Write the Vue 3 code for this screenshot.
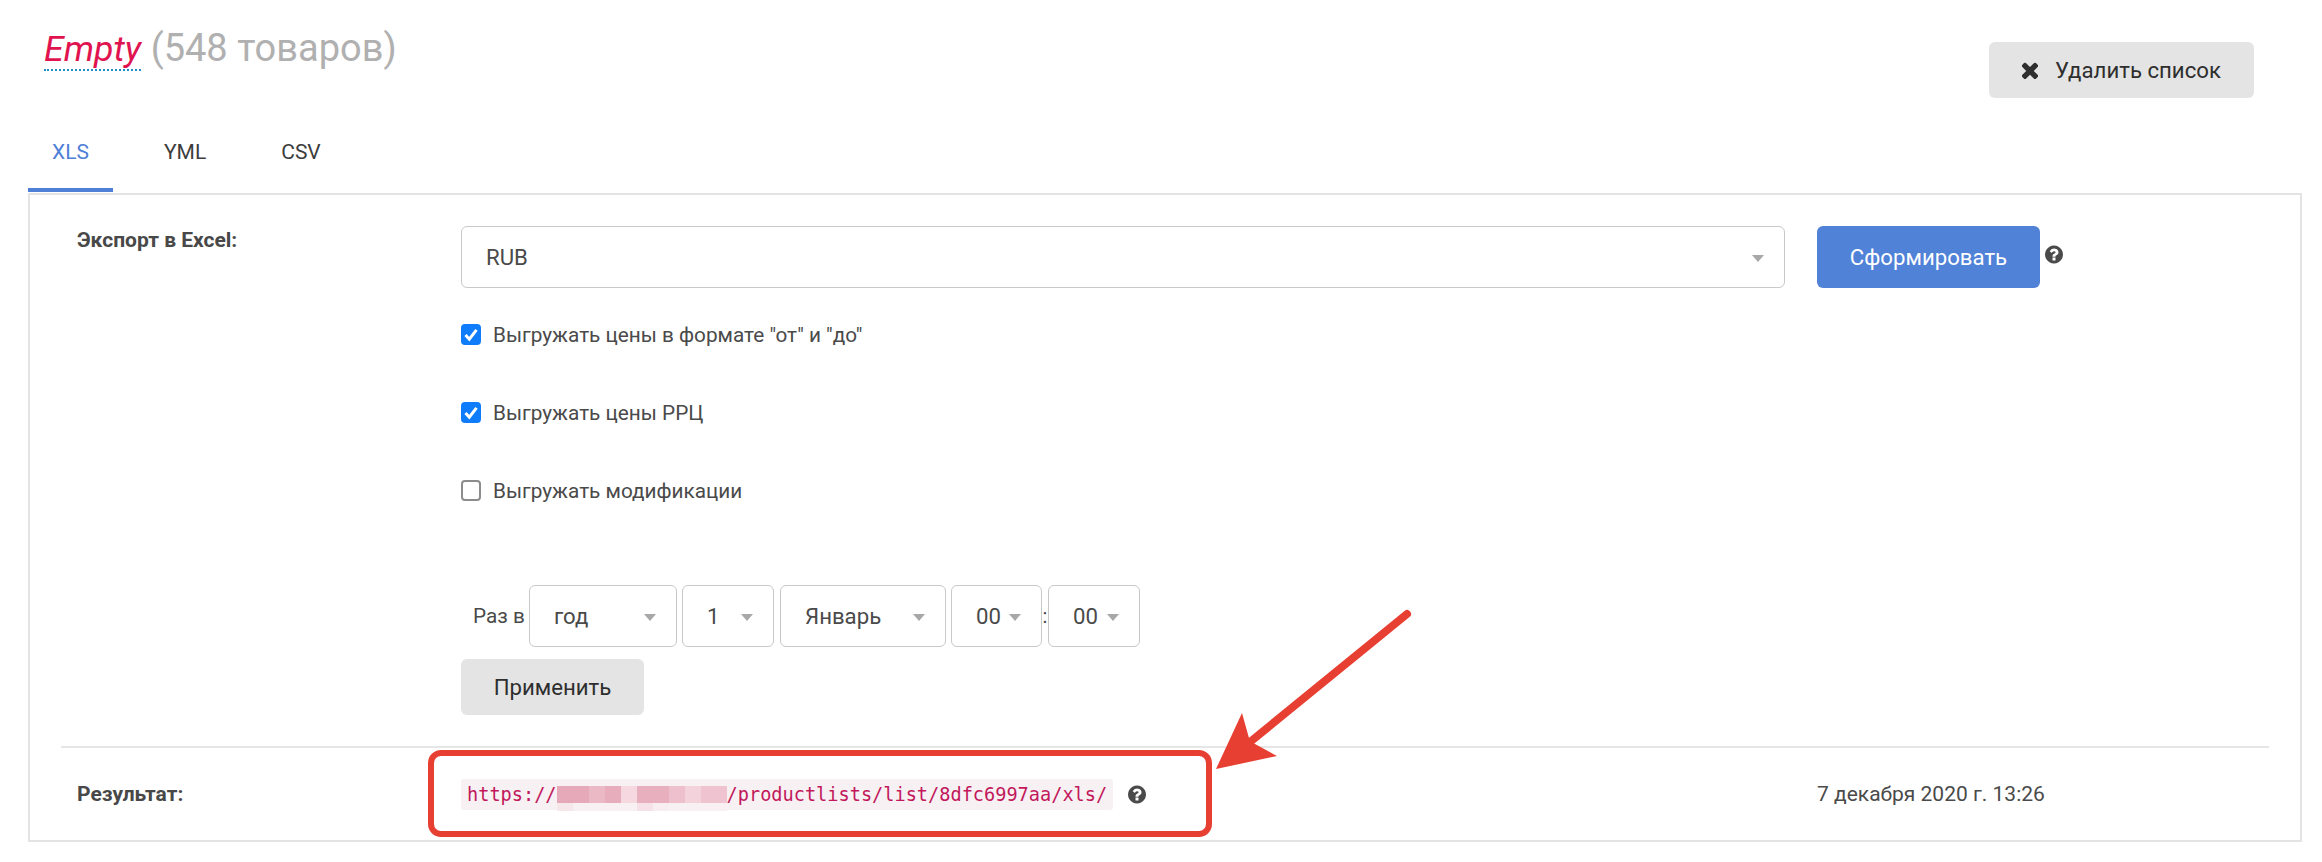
<script setup>
const tabs = [
  { name: 'XLS', active: true },
  { name: 'YML', active: false },
  { name: 'CSV', active: false }
]
const checks = [
  { label: 'Выгружать цены в формате "от" и "до"', on: true },
  { label: 'Выгружать цены РРЦ', on: true },
  { label: 'Выгружать модификации', on: false }
]
const mosaicTop = ['#e6a9b9', '#e6a9b9', '#ebb8c6', '#e8adbd', '#f5d8e0', '#e8afbf', '#e8afbf', '#eebfcc', '#f3d2db', '#efc4d0', '#efc4d0']
const mosaicBottom = ['#f6e7eb', '#f8f1f4', '#f8f1f4', '#f8f0f3', '#f8f1f4', '#f5e1e7', '#f8eef1', '#f8f1f4', '#f8f1f4', '#f8f0f3', '#f8f0f3']
const questionPath = 'M1024 1376v-192q0-14-9-23t-23-9h-192q-14 0-23 9t-9 23v192q0 14 9 23t23 9h192q14 0 23-9t9-23zm256-672q0-88-55.5-163t-138.5-116-170-41q-243 0-371 213-15 24 8 42l132 100q7 6 19 6 16 0 25-12 53-68 86-92 34-24 86-24 48 0 85.5 26t37.5 59q0 38-20 61t-68 45q-63 28-115.5 86.5t-52.5 125.5v36q0 14 9 23t23 9h192q14 0 23-9t9-23q0-19 21.5-49.5t54.5-49.5q32-18 49-28.5t46-35 44.5-48 28-60.5 12.5-81zm384 192q0 209-103 385.5t-279.5 279.5-385.5 103-385.5-103-279.5-279.5-103-385.5 103-385.5 279.5-279.5 385.5-103 385.5 103 279.5 279.5 103 385.5z'
</script>

<template>
  <div class="page">
    <header class="head">
      <h1 class="title"><em class="name">Empty</em> <span class="count">(548 товаров)</span></h1>
      <button class="btn btn-grey btn-delete">
        <svg class="x" viewBox="128 256 1152 1280"><path d="M1298 1322q0 40-28 68l-136 136q-28 28-68 28t-68-28l-294-294-294 294q-28 28-68 28t-68-28l-136-136q-28-28-28-68t28-68l294-294-294-294q-28-28-28-68t28-68l136-136q28-28 68-28t68 28l294 294 294-294q28-28 68-28t68 28l136 136q28 28 28 68t-28 68l-294 294 294 294q28 28 28 68z" /></svg>
        Удалить список
      </button>
    </header>

    <nav class="tabs">
      <a v-for="t in tabs" :key="t.name" class="tab" :class="{ active: t.active }">{{ t.name }}</a>
    </nav>

    <section class="panel">
      <div class="row form">
        <div class="label">Экспорт в Excel:</div>
        <div class="fields">
          <div class="top-line">
            <div class="select wide">RUB<i class="caret"></i></div>
            <button class="btn btn-blue">Сформировать</button>
            <svg class="help" viewBox="128 128 1536 1536"><path :d="questionPath" /></svg>
          </div>

          <div class="checks">
            <label v-for="c in checks" :key="c.label" class="check">
              <span class="box" :class="{ on: c.on }">
                <svg v-if="c.on" viewBox="0 0 20 21"><path d="M4.5 11l3.8 4.2 7.2-9.4" /></svg>
              </span>
              {{ c.label }}
            </label>
          </div>

          <div class="schedule">
            <span class="every">Раз в</span>
            <div class="select s-year">год<i class="caret"></i></div>
            <div class="select s-day">1<i class="caret"></i></div>
            <div class="select s-month">Январь<i class="caret"></i></div>
            <div class="select s-time">00<i class="caret"></i></div>
            <span class="colon">:</span>
            <div class="select s-time s-last">00<i class="caret"></i></div>
          </div>

          <button class="btn btn-grey btn-apply">Применить</button>
        </div>
      </div>

      <div class="row result">
        <div class="label">Результат:</div>
        <div class="link">
          <code class="code">https://<span class="mosaic"><span class="tiles"><i v-for="(m, i) in mosaicTop" :key="'t' + i" :style="{ background: m }"></i><i v-for="(m, i) in mosaicBottom" :key="'b' + i" :style="{ background: m }"></i></span></span>/productlists/list/8dfc6997aa/xls/</code>
          <svg class="help" viewBox="128 128 1536 1536"><path :d="questionPath" /></svg>
        </div>
        <div class="date">7 декабря 2020 г. 13:26</div>
      </div>
    </section>

    <svg class="annotation" viewBox="0 0 2322 862" width="2322" height="862">
      <rect x="431" y="753" width="778" height="81" rx="10" fill="none" stroke="#e83f33" stroke-width="6" />
      <path d="M1407 614L1250 742" fill="none" stroke="#e83f33" stroke-width="8" stroke-linecap="round" />
      <path d="M1216 769L1242 713L1249 738L1255 744L1277 756Z" fill="#e83f33" />
    </svg>
  </div>
</template>

<style>
html, body { background: #fff; }
</style>

<style scoped>
.page {
  position: relative;
  box-sizing: border-box;
  width: 2322px;
  height: 862px;
  padding-left: 28px;
  overflow: hidden;
  font-family: Roboto, "Liberation Sans", sans-serif;
  font-size: 21px;
  color: #4a4a4a;
}
.head {
  display: flex;
  justify-content: space-between;
  align-items: flex-start;
  height: 131px;
  width: 2226px;
}
.title {
  margin: 28px 0 0 16px;
  font-size: 38px;
  font-weight: 400;
  line-height: 40px;
  color: #b0b0b0;
}
.name {
  display: inline-block;
  font-size: 35.7px;
  color: #e0134f;
  border-bottom: 2px dotted #1f8fc4;
}
.btn {
  border: 0;
  font-family: inherit;
  font-size: 22.2px;
  border-radius: 6px;
  padding: 0;
  line-height: 1;
}
.btn-grey { background: #e4e4e4; color: #2e2e2e; }
.btn-blue {
  width: 223px;
  height: 62px;
  margin-left: 32px;
  background: #5082d8;
  color: #fff;
}
.btn-delete {
  display: flex;
  align-items: center;
  justify-content: center;
  gap: 17px;
  width: 265px;
  height: 56px;
  margin-top: 42px;
}
.x { width: 16px; height: 18px; fill: #2e2e2e; }
.tabs {
  display: flex;
  gap: 27px;
  height: 62px;
}
.tab {
  box-sizing: border-box;
  height: 61px;
  padding: 8px 24px 0;
  line-height: 26px;
  font-size: 21px;
  color: #3c3c3c;
  border-bottom: 4px solid transparent;
}
.tab.active { color: #4f80d8; border-bottom-color: #4f80d8; }
.panel {
  box-sizing: border-box;
  width: 2274px;
  padding: 0 31px;
  border: 2px solid #e3e3e3;
}
.row {
  display: grid;
  grid-template-columns: 384px 1fr;
  padding-left: 16px;
}
.form { padding-top: 31px; padding-bottom: 31px; border-bottom: 2px solid #e6e6e6; }
.label { font-weight: 700; font-size: 21px; line-height: 28px; color: #484848; }
.fields { display: flex; flex-direction: column; align-items: flex-start; }
.top-line { display: flex; align-items: flex-start; }
.help { width: 18px; height: 19px; fill: #4a4a4a; flex: none; }
.top-line .help { margin: 19px 0 0 5px; }
.select {
  position: relative;
  box-sizing: border-box;
  flex: none;
  height: 62px;
  line-height: 60px;
  padding-left: 24px;
  font-size: 22.2px;
  border: 1.5px solid #c9c9c9;
  border-radius: 6px;
  color: #4a4a4a;
}
.caret {
  position: absolute;
  right: 20px;
  top: 28px;
  border-style: solid;
  border-width: 7px 6.5px 0;
  border-color: #a8a8a8 transparent transparent;
}
.wide { width: 1324px; }
.checks { display: flex; flex-direction: column; gap: 57px; margin-top: 36px; }
.check { display: flex; align-items: center; gap: 12px; height: 21px; font-size: 20.75px; }
.box {
  box-sizing: border-box;
  width: 20px;
  height: 21px;
  border: 2px solid #8c8c8c;
  border-radius: 4px;
}
.box.on { background: #0f7dfb; border: 0; }
.box svg { display: block; width: 20px; height: 21px; fill: none; stroke: #fff; stroke-width: 3; }
.schedule { display: flex; align-items: center; margin-top: 84px; padding-left: 12px; }
.every { width: 56px; font-size: 20.75px; white-space: nowrap; }
.s-year { width: 148px; }
.s-day { width: 92px; margin-left: 5px; }
.s-month { width: 166px; margin-left: 6px; }
.s-time { width: 91px; }
.s-month + .s-time { margin-left: 5px; }
.s-last { width: 92px; }
.colon { width: 6px; text-align: center; font-size: 20px; }
.btn-apply { width: 183px; height: 56px; margin-top: 12px; }
.result { align-items: center; height: 92px; grid-template-columns: 384px 1356px 1fr; }
.link { display: flex; align-items: center; gap: 15px; }
.code {
  display: block;
  box-sizing: border-box;
  height: 31px;
  padding: 0 6px;
  background: #f7f1f4;
  border-radius: 3px;
  font-family: "DejaVu Sans Mono", "Liberation Mono", monospace;
  font-size: 18.6px;
  line-height: 31px;
  color: #c2185b;
  white-space: nowrap;
}
.mosaic {
  position: relative;
  display: inline-block;
  width: 170px;
  height: 31px;
  vertical-align: top;
}
.tiles {
  position: absolute;
  left: 0;
  top: 7px;
  display: grid;
  grid-template-columns: repeat(11, 16px);
  grid-template-rows: 17px 8px;
  width: 170px;
  overflow: hidden;
}
.date { font-size: 21px; }
.annotation { position: absolute; left: 0; top: 0; pointer-events: none; }
</style>
